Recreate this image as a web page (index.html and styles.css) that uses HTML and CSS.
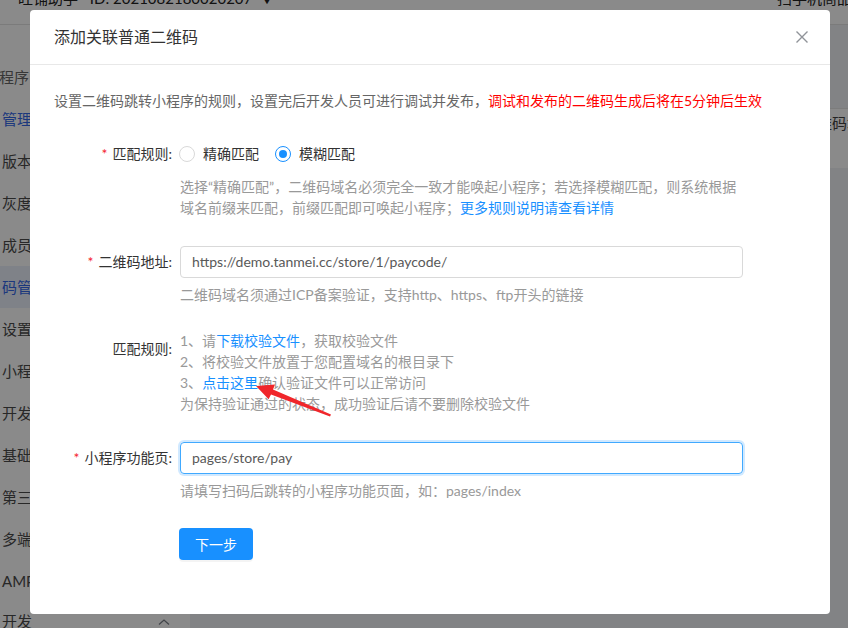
FILE: index.html
```html
<!DOCTYPE html>
<html lang="zh-CN">
<head>
<meta charset="utf-8">
<title>添加关联普通二维码</title>
<link rel="stylesheet" href="styles.css">
</head>
<body>
<div class="page">
  <header class="topbar">
    <div class="brand">旺铺助手 <span class="appid">ID: 2021082180020207</span> <span class="caret">▼</span></div>
    <div class="topright">扫手机商品</div>
  </header>
  <div class="layout">
    <aside class="sidebar">
      <div class="menu-item group"><span class="cut">小程序</span></div>
      <div class="menu-item link">管理中心</div>
      <div class="menu-item">版本管理</div>
      <div class="menu-item">灰度发布</div>
      <div class="menu-item">成员管理</div>
      <div class="menu-item active">码管理</div>
      <div class="menu-item">设置</div>
      <div class="menu-item">小程序码</div>
      <div class="menu-item">开发管理</div>
      <div class="menu-item">基础设置</div>
      <div class="menu-item">第三方服务</div>
      <div class="menu-item">多端应用</div>
      <div class="menu-item">AMP</div>
      <div class="menu-item submenu">开发
        <svg class="chev" width="12" height="8" viewBox="0 0 12 8"><path d="M1 6.5 L6 2 L11 6.5" fill="none" stroke="#7a7f88" stroke-width="1.3"/></svg>
      </div>
    </aside>
    <main class="main">
      <div class="card">
        <div class="toolbar">
          <span class="tlabel">二维码地址</span>
          <span class="tinput"></span>
        </div>
      </div>
    </main>
  </div>
</div>

<div class="mask"></div>

<div class="dialog">
  <div class="dlg-head">
    <div class="dlg-title">添加关联普通二维码</div>
    <svg class="close" width="12" height="12" viewBox="0 0 12 12"><path d="M0.5 0.5 L11.5 11.5 M11.5 0.5 L0.5 11.5" stroke="#909399" stroke-width="1.4" fill="none"/></svg>
  </div>
  <div class="dlg-body">
    <p class="desc">设置二维码跳转小程序的规则，设置完后开发人员可进行调试并发布，<span class="red">调试和发布的二维码生成后将在5分钟后生效</span></p>

    <div class="form">
      <div class="form-item">
        <div class="label req">匹配规则:</div>
        <div class="control">
          <div class="radios">
            <label class="radio"><span class="radio-dot"></span><span class="radio-text">精确匹配</span></label>
            <label class="radio"><span class="radio-dot checked"></span><span class="radio-text">模糊匹配</span></label>
          </div>
          <div class="help">选择“精确匹配”，二维码域名必须完全一致才能唤起小程序；若选择模糊匹配，则系统根据<br>域名前缀来匹配，前缀匹配即可唤起小程序；<a class="link">更多规则说明请查看详情</a></div>
        </div>
      </div>

      <div class="form-item">
        <div class="label req">二维码地址:</div>
        <div class="control">
          <div class="input">https://demo.tanmei.cc/store/1/paycode/</div>
          <div class="help">二维码域名须通过ICP备案验证，支持http、https、ftp开头的链接</div>
        </div>
      </div>

      <div class="form-item tight">
        <div class="label tall">匹配规则:</div>
        <div class="control steps">
          <div>1、请<a class="link">下载校验文件</a>，获取校验文件</div>
          <div>2、将校验文件放置于您配置域名的根目录下</div>
          <div>3、<a class="link">点击这里</a>确认验证文件可以正常访问</div>
          <div>为保持验证通过的状态，成功验证后请不要删除校验文件</div>
        </div>
      </div>

      <div class="form-item">
        <div class="label req">小程序功能页:</div>
        <div class="control">
          <div class="input focus">pages/store/pay</div>
          <div class="help">请填写扫码后跳转的小程序功能页面，如：pages/index</div>
        </div>
      </div>

      <div class="actions">
        <button class="btn">下一步</button>
      </div>
    </div>
  </div>
</div>

<svg class="arrow" width="848" height="628" viewBox="0 0 848 628">
  <polygon points="256,386 275,384.6 273,389.4 331,414.4 330,416.4 271,394.6 268.6,399.2" fill="#f0262b"/>
</svg>
</body>
</html>
```

FILE: styles.css
```css
* { box-sizing: border-box; }

html, body {
  margin: 0;
  width: 848px;
  height: 628px;
  overflow: hidden;
}

body {
  font-family: Lato, "Noto Sans CJK SC", sans-serif;
  font-size: 14px;
  color: #333;
}

/* ---------- background page ---------- */
.page {
  width: 848px;
  height: 628px;
  background: #f0f2f5;
  overflow: hidden;
}

.topbar {
  height: 54px;
  margin-top: -29px;
  background: #fff;
  border-bottom: 1px solid #e3e3e3;
  display: flex;
  justify-content: space-between;
  align-items: center;
  padding: 0 0 0 18px;
  font-size: 15px;
  color: #222;
  white-space: nowrap;
}

.appid { margin-left: 8px; }
.caret { font-size: 10px; margin-left: 6px; }
.topright { margin-right: -4px; }

.layout {
  display: flex;
  height: 603px;
}

.sidebar {
  width: 190px;
  flex: none;
  background: #fff;
  padding-top: 31px;
  display: flex;
  flex-direction: column;
}

.menu-item {
  height: 42px;
  flex: none;
  line-height: 42px;
  padding-left: 2px;
  color: #4a4a4a;
  font-size: 15px;
  white-space: nowrap;
  overflow: hidden;
}

.menu-item.group { color: #666; }
.menu-item .cut { margin-left: -18px; }
.menu-item.link { color: #3568e8; }
.menu-item.active { background: #eaf0fb; color: #3568e8; }

.menu-item.submenu {
  display: flex;
  justify-content: space-between;
  padding-right: 20px;
  line-height: normal;
  padding-top: 8px;
  align-items: flex-start;
}
.chev { margin-top: 8px; }

.main {
  flex: 1;
  padding: 0;
}

.card {
  margin-top: 83px;
  height: 60px;
  background: #fff;
  border-top: 1px solid #e6e6e6;
}

.toolbar {
  display: flex;
  align-items: center;
  padding-left: 612px;
  height: 26px;
  white-space: nowrap;
}
.tlabel { color: #444; font-size: 15px; }
.tinput {
  width: 200px;
  height: 28px;
  border: 1px solid #d9d9d9;
  margin-left: 8px;
}

.mask {
  position: fixed;
  inset: 0;
  background: rgba(0, 0, 0, 0.46);
}

/* ---------- dialog ---------- */
.dialog {
  position: absolute;
  left: 30px;
  top: 10px;
  width: 800px;
  height: 604px;
  background: #fff;
  border-radius: 4px;
}

.dlg-head {
  height: 55px;
  padding: 0 22px 0 24px;
  display: flex;
  align-items: center;
  justify-content: space-between;
  border-bottom: 1px solid #e8e8e8;
}

.dlg-title {
  font-size: 16px;
  line-height: 22px;
  color: #333;
}

.close { display: block; }

.dlg-body {
  padding: 25px 24px 0 24px;
}

.desc {
  margin: 0;
  line-height: 21px;
  color: #666;
  white-space: nowrap;
}

.red { color: #ff0000; }

.form { margin-top: 27px; }

.form-item {
  display: grid;
  grid-template-columns: 126px 1fr;
}

.form-item + .form-item { margin-top: 28px; }
.form-item.tight { margin-top: 25px; }

.label {
  text-align: right;
  padding-right: 8px;
  line-height: 32px;
  color: #333;
  white-space: nowrap;
}

.label.tall { line-height: 37px; }

.req::before {
  content: "*";
  color: #f5222d;
  margin-right: 5px;
}

.control { min-width: 0; }

.radios {
  display: flex;
  align-items: center;
  height: 32px;
  margin-left: -1px;
}

.radio {
  display: flex;
  align-items: center;
  margin-right: 8px;
}

.radio-dot {
  position: relative;
  width: 16px;
  height: 16px;
  border: 1px solid #d9d9d9;
  border-radius: 50%;
  background: #fff;
}

.radio-dot.checked { border-color: #1890ff; }
.radio-dot.checked::after {
  content: "";
  position: absolute;
  left: 3px;
  top: 3px;
  width: 8px;
  height: 8px;
  border-radius: 50%;
  background: #1890ff;
}

.radio-text {
  padding: 0 8px;
  color: #333;
  line-height: 22px;
}

.help {
  margin-top: 6px;
  line-height: 21px;
  color: #999;
  white-space: nowrap;
}

.link {
  color: #1890ff;
  text-decoration: none;
}

.input {
  width: 563px;
  height: 32px;
  border: 1px solid #d9d9d9;
  border-radius: 4px;
  padding: 0 11px;
  line-height: 30px;
  color: #595959;
  white-space: nowrap;
}

.input.focus {
  border-color: #40a9ff;
  box-shadow: 0 0 0 2px rgba(24, 144, 255, 0.2);
}

.steps {
  line-height: 21px;
  color: #999;
  white-space: nowrap;
}

.actions {
  margin-top: 27px;
  padding-left: 125px;
}

.btn {
  width: 74px;
  height: 32px;
  border: 0;
  border-radius: 4px;
  background: #1890ff;
  color: #fff;
  font-family: inherit;
  font-size: 14px;
  box-shadow: 0 2px 0 rgba(0, 0, 0, 0.045);
}

.arrow {
  position: absolute;
  left: 0;
  top: 0;
  pointer-events: none;
}
```
